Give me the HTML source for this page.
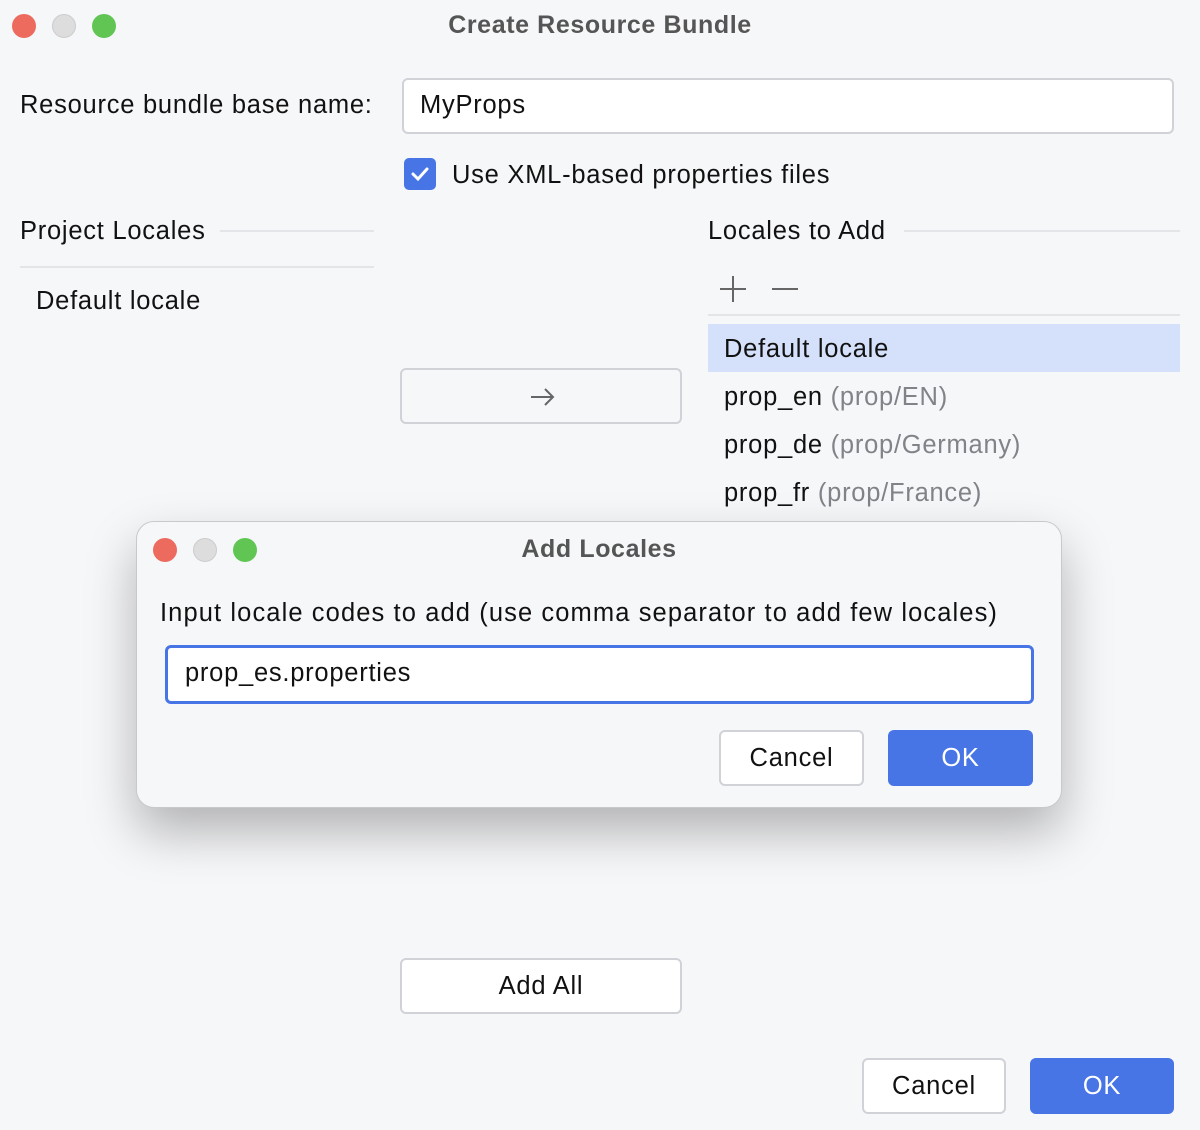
<!DOCTYPE html>
<html><head><style>
*{box-sizing:border-box;margin:0;padding:0}
body{width:1200px;height:1130px;background:#f6f7f9;font-family:"Liberation Sans",sans-serif;font-size:25.5px;letter-spacing:0.75px;color:#111;position:relative;overflow:hidden}
.a{position:absolute;white-space:nowrap}
.dot{position:absolute;width:24px;height:24px;border-radius:50%}
.btn{position:absolute;background:#fff;border:2px solid #d0d2d8;border-radius:6px;text-align:center}
.ok{position:absolute;background:#4775e6;border-radius:6px;color:#fff;text-align:center}
.g{color:#808388}
.t{font-weight:bold;color:#555;font-size:25px;letter-spacing:0.6px}
</style></head><body>
<div class="dot" style="left:12px;top:14px;background:#ed6a5e"></div>
<div class="dot" style="left:52px;top:14px;background:#dddddd;border:1px solid #ccc"></div>
<div class="dot" style="left:92px;top:14px;background:#61c554"></div>
<div class="a t" style="left:0;width:1200px;text-align:center;top:11px">Create Resource Bundle</div>

<div class="a" style="left:20px;top:91px">Resource bundle base name:</div>
<div class="a" style="left:402px;top:78px;width:772px;height:56px;background:#fff;border:2px solid #d0d2d8;border-radius:6px;padding:11px 16px">MyProps</div>
<div class="a" style="left:404px;top:158px;width:32px;height:32px;background:#4775e6;border-radius:5px">
<svg width="32" height="32"><path d="M9 16l5 5 9-10" stroke="#fff" stroke-width="3" fill="none" stroke-linecap="round"/></svg></div>
<div class="a" style="left:452px;top:161px">Use XML-based properties files</div>

<div class="a" style="left:20px;top:217px">Project Locales</div>
<div class="a" style="left:220px;top:230px;width:154px;height:2px;background:#e3e5e9"></div>
<div class="a" style="left:20px;top:266px;width:354px;height:2px;background:#e3e5e9"></div>
<div class="a" style="left:36px;top:287px">Default locale</div>

<div class="btn" style="left:400px;top:368px;width:282px;height:56px;background:#f6f7f9">
<svg width="40" height="52"><path d="M10 27h22M24 19l8 8-8 8" stroke="#666" stroke-width="2" fill="none"/></svg></div>

<div class="a" style="left:708px;top:217px">Locales to Add</div>
<div class="a" style="left:904px;top:230px;width:276px;height:2px;background:#e3e5e9"></div>
<svg class="a" style="left:716px;top:274px" width="90" height="30"><path d="M17 2v26M4 15h26M56 15h26" stroke="#666" stroke-width="2"/></svg>
<div class="a" style="left:708px;top:314px;width:472px;height:2px;background:#e3e5e9"></div>
<div class="a" style="left:708px;top:324px;width:472px;height:48px;background:#d5e1fb"></div>
<div class="a" style="left:724px;top:335px">Default locale</div>
<div class="a" style="left:724px;top:383px">prop_en <span class="g">(prop/EN)</span></div>
<div class="a" style="left:724px;top:431px">prop_de <span class="g">(prop/Germany)</span></div>
<div class="a" style="left:724px;top:479px">prop_fr <span class="g">(prop/France)</span></div>

<div class="a" style="left:136px;top:521px;width:926px;height:287px;background:#f6f7f9;border:1px solid #c8c9cc;border-radius:18px;box-shadow:0 24px 50px rgba(0,0,0,.28)">
<div class="dot" style="left:16px;top:16px;background:#ed6a5e"></div>
<div class="dot" style="left:56px;top:16px;background:#dddddd;border:1px solid #ccc"></div>
<div class="dot" style="left:96px;top:16px;background:#61c554"></div>
<div class="a t" style="left:0;width:924px;text-align:center;top:13px">Add Locales</div>
<div class="a" style="left:23px;top:77px;letter-spacing:1.1px">Input locale codes to add (use comma separator to add few locales)</div>
<div class="a" style="left:28px;top:123px;width:869px;height:59px;background:#fff;border:3px solid #4775e6;border-radius:6px;padding:11px 17px">prop_es.properties</div>
<div class="btn" style="left:582px;top:208px;width:145px;height:56px;line-height:52px">Cancel</div>
<div class="ok" style="left:751px;top:208px;width:145px;height:56px;line-height:56px">OK</div>
</div>

<div class="btn" style="left:400px;top:958px;width:282px;height:56px;line-height:52px">Add All</div>
<div class="btn" style="left:862px;top:1058px;width:144px;height:56px;line-height:52px">Cancel</div>
<div class="ok" style="left:1030px;top:1058px;width:144px;height:56px;line-height:56px">OK</div>
</body></html>
